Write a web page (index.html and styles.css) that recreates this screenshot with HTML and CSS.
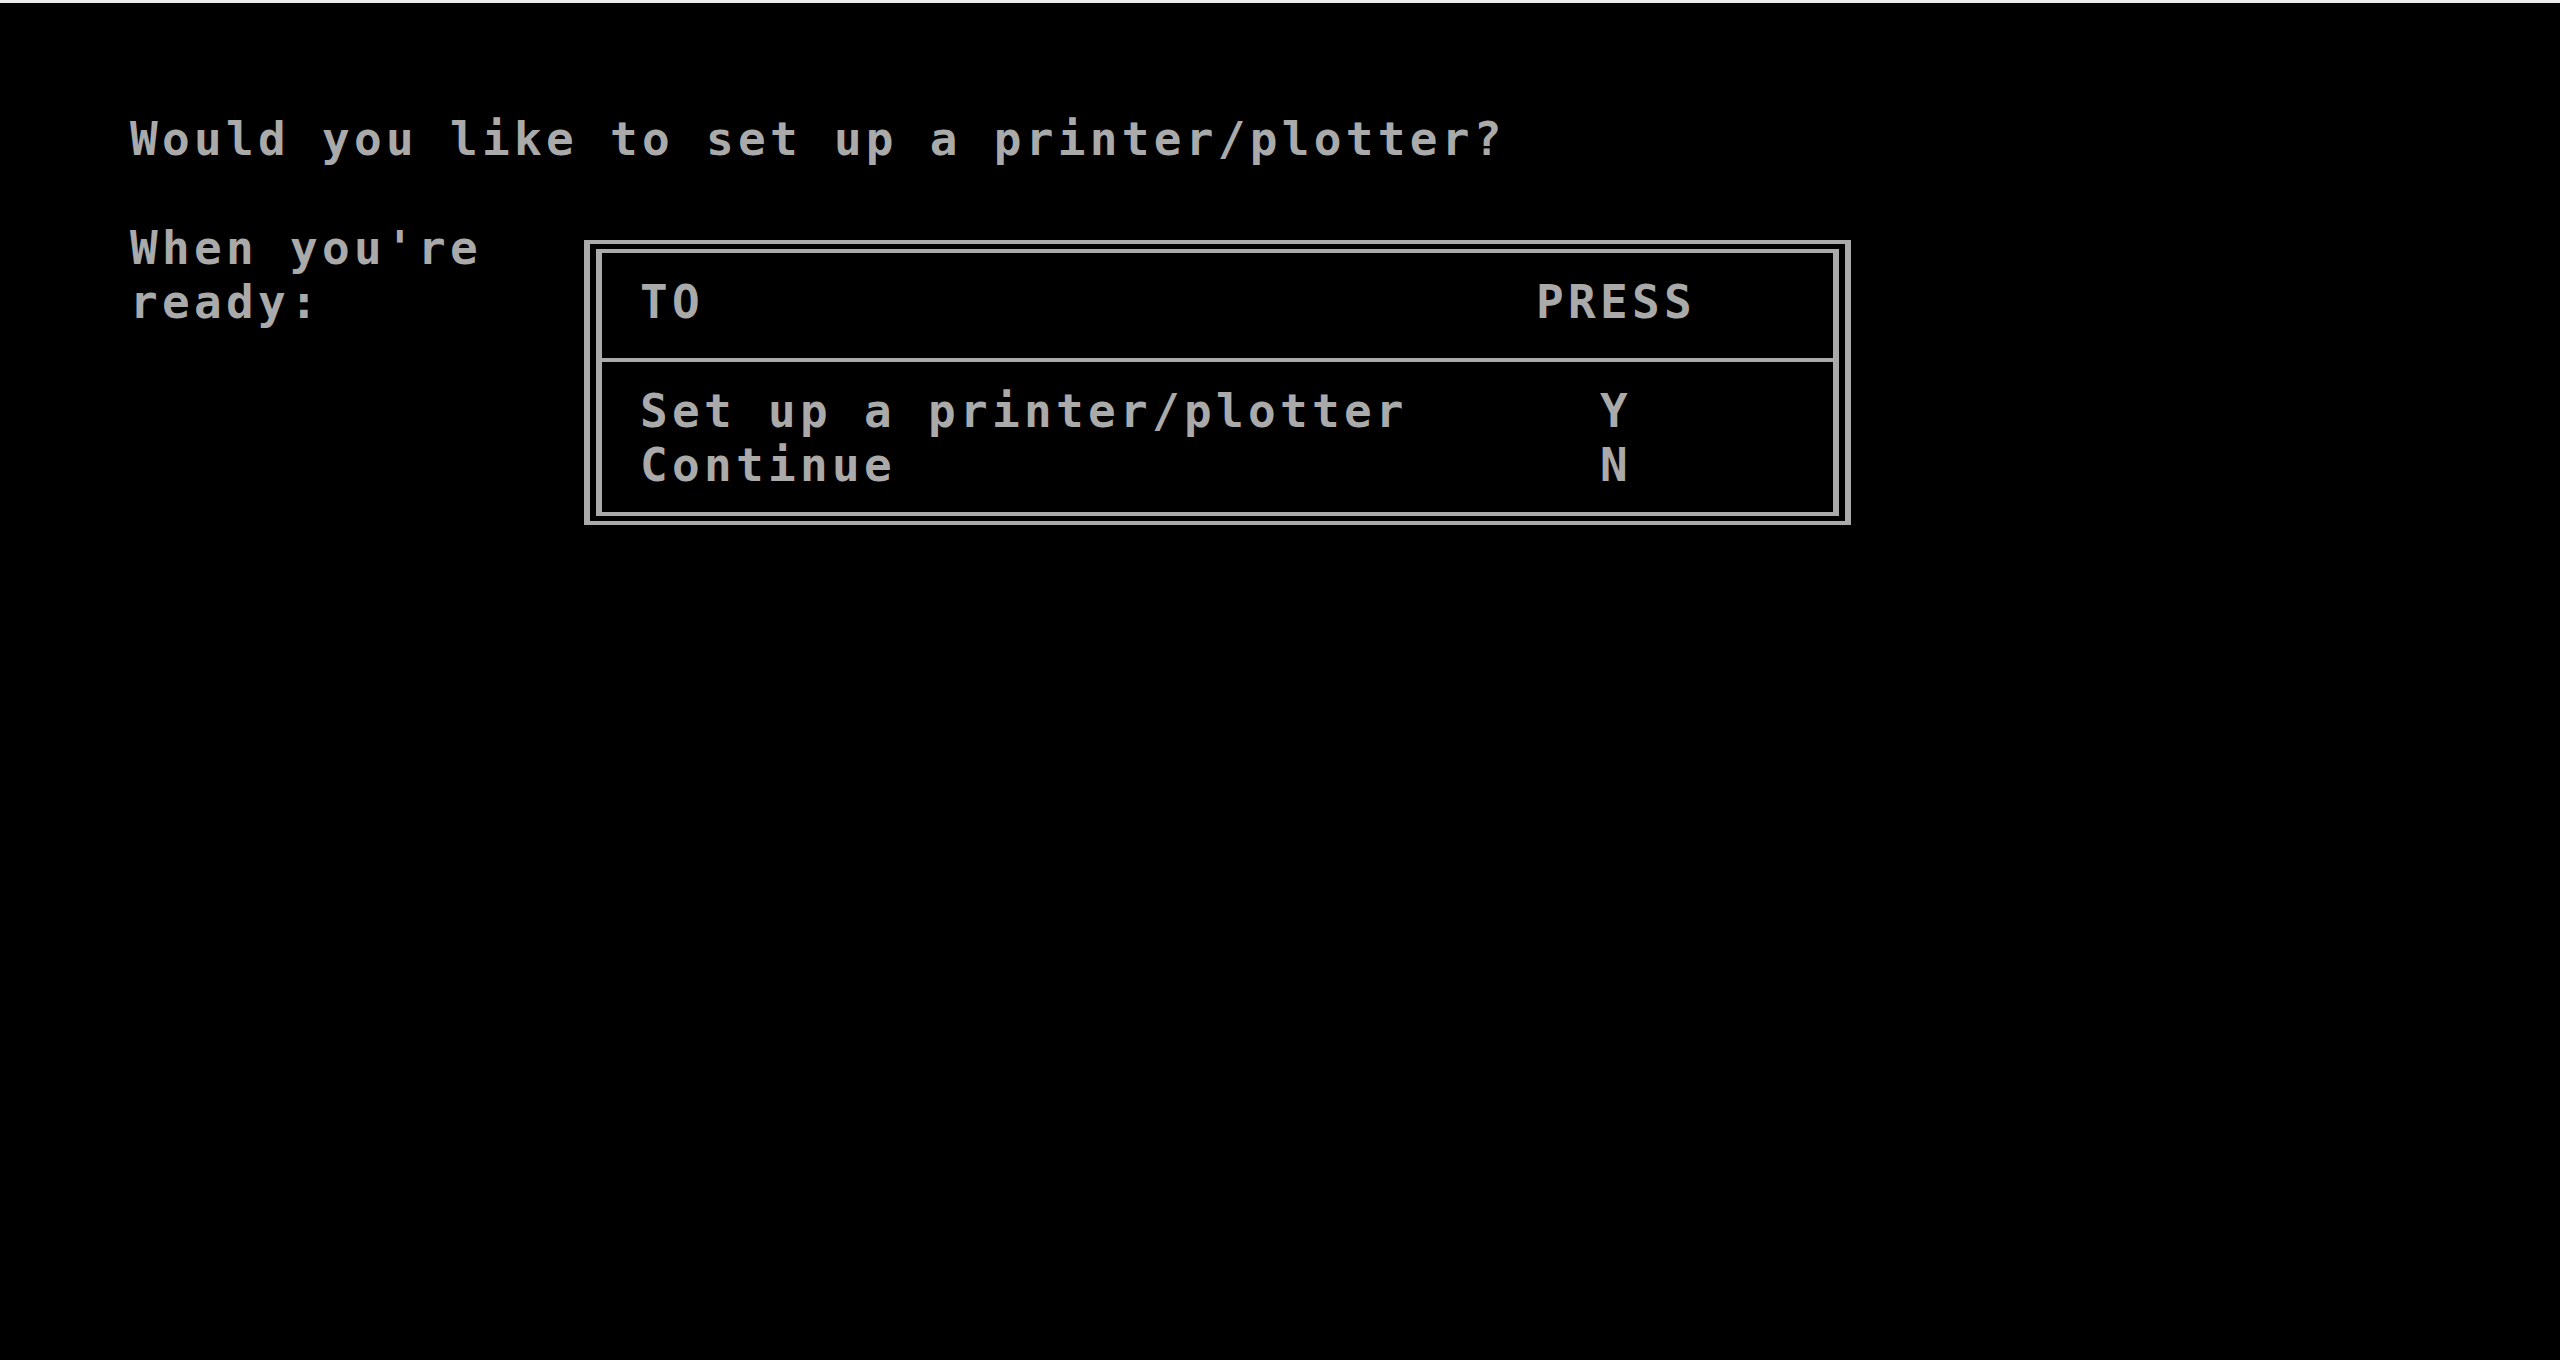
FILE: index.html
```html
<!DOCTYPE html>
<html lang="en">
<head>
<meta charset="utf-8">
<title>Printer/Plotter Setup</title>
<link rel="stylesheet" href="styles.css">
</head>
<body>
<div class="topstrip"></div>
<main class="screen">
  <p class="question">Would you like to set up a printer/plotter?</p>
  <div class="prompt">
    <div class="label"><div>When you're</div><div>ready:</div></div>
    <div class="box">
      <div class="box-head">
        <span class="col-to">TO</span>
        <span class="col-press">PRESS</span>
      </div>
      <div class="box-body">
        <div class="opt"><span class="col-to">Set up a printer/plotter</span><span class="col-key">Y</span></div>
        <div class="opt"><span class="col-to">Continue</span><span class="col-key">N</span></div>
      </div>
    </div>
  </div>
</main>
</body>
</html>
```
FILE: styles.css
```css
html, body {
  margin: 0;
  padding: 0;
  background: #000;
}
body {
  width: 2560px;
  height: 1360px;
  overflow: hidden;
}
.topstrip {
  height: 3px;
  background: #ececec;
}
.screen {
  padding: 108.8px 0 0 130px;
  font-family: "DejaVu Sans Mono", "Liberation Mono", monospace;
  font-weight: bold;
  font-size: 46px;
  letter-spacing: 4.3px;
  line-height: 54.4px;
  color: #aaaaaa;
  white-space: nowrap;
}
.question {
  margin: 0 0 54.4px 0;
}
.prompt {
  display: flex;
  align-items: flex-start;
}
.label {
  width: 448px;
  flex: none;
}
.box {
  box-sizing: border-box;
  flex: none;
  margin-left: 6px;
  margin-top: 19.4px;
  width: 1267px;
  border-style: double;
  border-color: #aaaaaa;
  border-width: 13px 18px;
}
.box-head {
  display: grid;
  grid-template-columns: 896px auto;
  padding: 22px 0 28.6px 38px;
  border-bottom: 4px solid #aaaaaa;
}
.box-body {
  padding: 21.8px 0 19.4px 38px;
}
.opt {
  display: grid;
  grid-template-columns: 896px auto;
}
.col-key {
  padding-left: 64px;
}
```
